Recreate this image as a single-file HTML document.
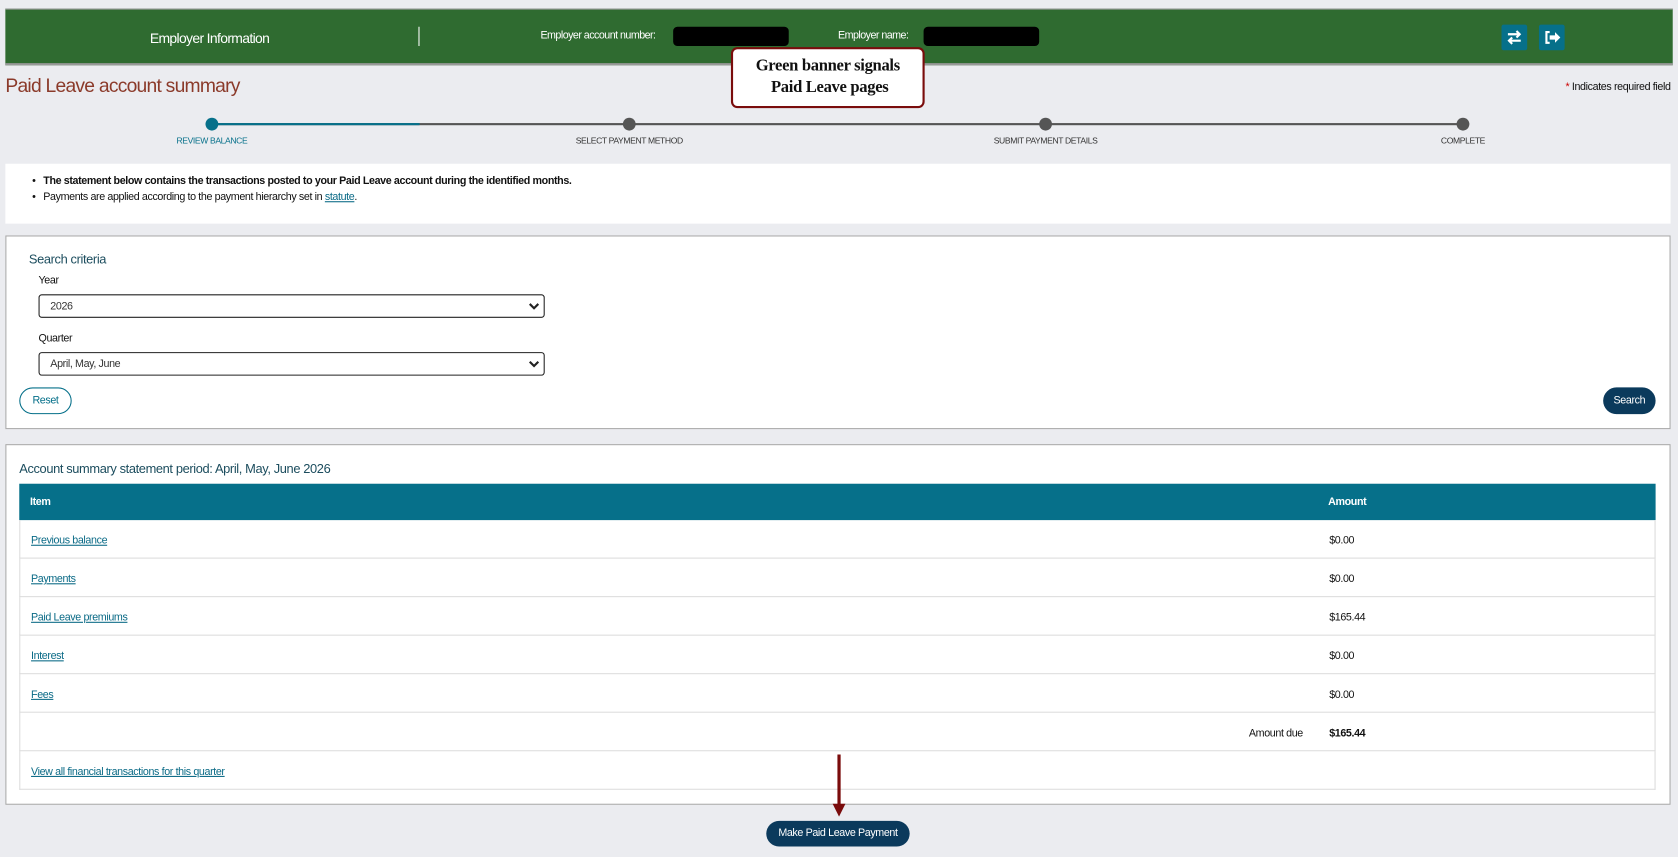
<!DOCTYPE html><html><head><meta charset="utf-8"><style>
html,body{margin:0;padding:0;width:1678px;height:857px;overflow:hidden;background:#ebecf0}
#w{position:absolute;left:0;top:0;width:1568px;height:801px;transform:scale(1.0702);transform-origin:0 0;font-family:"Liberation Sans",sans-serif;color:#111;letter-spacing:-0.35px}
.a{position:absolute}
.t{font-size:10px}
a{color:#0a6a86;text-decoration:underline}
.box{position:absolute;left:5px;width:1554px;background:#fff;border:1px solid #aaa}
.sel{position:absolute;left:36px;height:22px;border:1px solid #222;border-radius:3px;font-size:10px;line-height:22px;padding-left:10px;box-sizing:border-box;width:473px;color:#333}
.sel svg{position:absolute;right:4px;top:7px}
.row{position:absolute;left:18px;width:1527px;height:35px;border:1px solid #ddd;border-top:none;font-size:10px}
.row span{position:absolute;top:14px}
</style></head><body><div id="w">
<div class="a" style="left:5px;top:8px;width:1558px;height:50px;background:#2f6b30;border-top:1px solid #999;border-bottom:2px solid #999"></div>
<div class="a" style="left:140px;top:28px;color:#fff;font-size:13px;letter-spacing:-0.6px">Employer Information</div>
<div class="a" style="left:391px;top:25px;width:1px;height:18px;background:#fff"></div>
<div class="a" style="left:505px;top:28px;color:#fff;font-size:10px;letter-spacing:-0.5px">Employer account number:</div>
<div class="a" style="left:629px;top:25px;width:108px;height:18px;background:#000;border-radius:4px"></div>
<div class="a" style="left:783px;top:28px;color:#fff;font-size:10px;letter-spacing:-0.5px">Employer name:</div>
<div class="a" style="left:863px;top:25px;width:108px;height:18px;background:#000;border-radius:4px"></div>
<div class="a" style="left:1403px;top:23px;width:24px;height:24px;background:#06708a;border-radius:2px"><svg width="24" height="24"><path d="M6 9h11M14 6l3 3-3 3M18 15H7M10 12l-3 3 3 3" stroke="#fff" stroke-width="2" fill="none"/></svg></div>
<div class="a" style="left:1438px;top:23px;width:24px;height:24px;background:#06708a;border-radius:2px"><svg width="24" height="24"><path d="M10 7H7v10h3" stroke="#fff" stroke-width="2" fill="none"/><path d="M10 10h5V7l5 5-5 5v-3h-5z" fill="#fff"/></svg></div>
<div class="a" style="left:683px;top:44px;background:#fff;border:2px solid #7a0c0c;border-radius:6px;font-family:'Liberation Serif',serif;font-weight:bold;font-size:15.5px;line-height:20px;text-align:center;padding-top:6px;box-sizing:border-box;height:57px;width:181px;letter-spacing:-0.3px">Green banner signals<br>&nbsp;Paid Leave pages</div>
<div class="a" style="left:5px;top:70px;color:#8b3a2a;font-size:18px;letter-spacing:-0.7px">Paid Leave account summary</div>
<div class="a" style="right:7px;top:76px;font-size:10px"><span style="color:#c00">*</span> Indicates required field</div>
<div class="a" style="left:198px;top:115px;width:1169px;height:2px;background:#555"></div>
<div class="a" style="left:198px;top:115px;width:194px;height:2px;background:#06708a"></div>
<div class="a" style="left:192px;top:110px;width:12px;height:12px;border-radius:50%;background:#06708a"></div>
<div class="a" style="left:582px;top:110px;width:12px;height:12px;border-radius:50%;background:#555"></div>
<div class="a" style="left:971px;top:110px;width:12px;height:12px;border-radius:50%;background:#555"></div>
<div class="a" style="left:1361px;top:110px;width:12px;height:12px;border-radius:50%;background:#555"></div>
<div class="a" style="left:148px;top:127px;width:100px;text-align:center;font-size:8px;color:#06708a">REVIEW BALANCE</div>
<div class="a" style="left:508px;top:127px;width:160px;text-align:center;font-size:8px;color:#333">SELECT PAYMENT METHOD</div>
<div class="a" style="left:897px;top:127px;width:160px;text-align:center;font-size:8px;color:#333">SUBMIT PAYMENT DETAILS</div>
<div class="a" style="left:1317px;top:127px;width:100px;text-align:center;font-size:8px;color:#333">COMPLETE</div>
<div class="a" style="left:5px;top:153px;width:1556px;height:56px;background:#fff"></div>
<div class="a t" style="left:30px;top:164px">•&nbsp;&nbsp;&nbsp;<span style="font-weight:bold">The statement below contains the transactions posted to your Paid Leave account during the identified months.</span></div>
<div class="a t" style="left:30px;top:179px">•&nbsp;&nbsp;&nbsp;Payments are applied according to the payment hierarchy set in <a>statute</a>.</div>
<div class="box" style="top:220px;height:179px"></div>
<div class="a" style="left:27px;top:235px;font-size:12px;color:#1c4d5e">Search criteria</div>
<div class="a t" style="left:36px;top:257px">Year</div>
<div class="sel" style="top:275px">2026<svg width="10" height="8"><path d="M1 1l4 4 4-4" stroke="#222" stroke-width="2" fill="none"/></svg></div>
<div class="a t" style="left:36px;top:311px">Quarter</div>
<div class="sel" style="top:329px">April, May, June<svg width="10" height="8"><path d="M1 1l4 4 4-4" stroke="#222" stroke-width="2" fill="none"/></svg></div>
<div class="a" style="left:18px;top:362px;width:49px;height:25px;border:1px solid #06708a;border-radius:13px;box-sizing:border-box;text-align:center;line-height:24px;font-size:10px;color:#06708a">Reset</div>
<div class="a" style="left:1498px;top:362px;width:49px;height:25px;background:#0b3a5c;border-radius:13px;text-align:center;line-height:25px;font-size:10px;color:#fff">Search</div>
<div class="box" style="top:415px;height:335px"></div>
<div class="a" style="left:18px;top:431px;font-size:12px;color:#1c4d5e">Account summary statement period: April, May, June 2026</div>
<div class="a" style="left:18px;top:452px;width:1529px;height:34px;background:#06708a;color:#fff;font-size:10px;font-weight:bold"><span class="a" style="left:10px;top:12px">Item</span><span class="a" style="left:1223px;top:12px">Amount</span></div>
<div class="row" style="top:486px"><span style="left:10px"><a>Previous balance</a></span><span style="left:1223px">$0.00</span></div>
<div class="row" style="top:522px"><span style="left:10px"><a>Payments</a></span><span style="left:1223px">$0.00</span></div>
<div class="row" style="top:558px"><span style="left:10px"><a>Paid Leave premiums</a></span><span style="left:1223px">$165.44</span></div>
<div class="row" style="top:594px"><span style="left:10px"><a>Interest</a></span><span style="left:1223px">$0.00</span></div>
<div class="row" style="top:630px"><span style="left:10px"><a>Fees</a></span><span style="left:1223px">$0.00</span></div>
<div class="row" style="top:666px"><span style="left:1148px">Amount due</span><span style="left:1223px;font-weight:bold">$165.44</span></div>
<div class="row" style="top:702px"><span style="left:10px"><a>View all financial transactions for this quarter</a></span></div>
<svg class="a" style="left:776px;top:705px" width="16" height="60"><path d="M8 0v48" stroke="#7a0c0c" stroke-width="3"/><path d="M2 46h12l-6 12z" fill="#7a0c0c"/></svg>
<div class="a" style="left:716px;top:767px;width:134px;height:24px;background:#0b3a5c;border-radius:12px;text-align:center;line-height:24px;font-size:10px;color:#fff">Make Paid Leave Payment</div>
</div></body></html>
